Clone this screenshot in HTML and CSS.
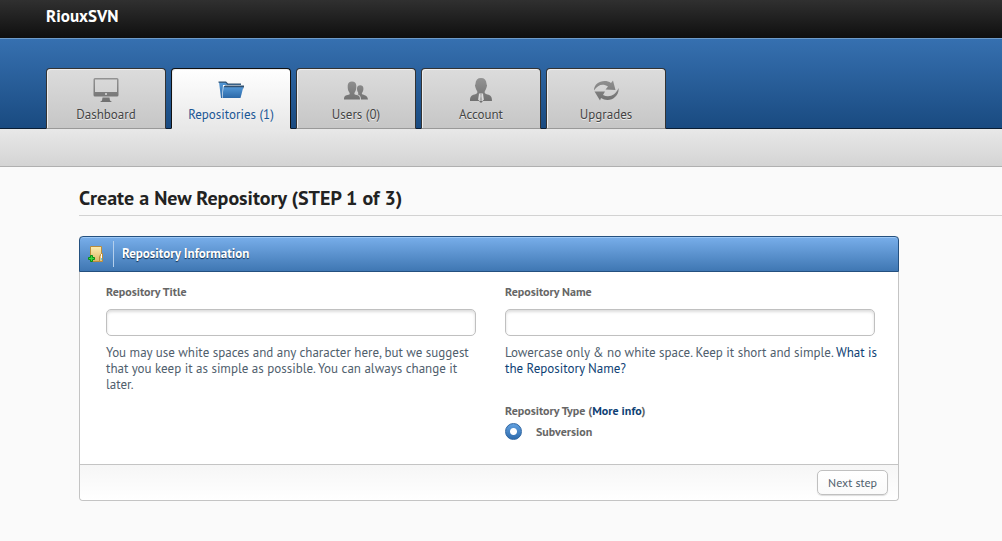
FILE: index.html
```html
<!DOCTYPE html>
<html lang="en">
<head>
    <meta charset="UTF-8">
    <meta name="viewport" content="width=device-width, initial-scale=1.0">
    <title>RiouxSVN</title>
    <link rel="stylesheet" href="styles.css">
</head>
<body>
    <!-- shared gradients for the icons -->
    <svg class="defs" width="0" height="0" aria-hidden="true">
        <defs>
            <linearGradient id="grey" x1="0" y1="0" x2="0" y2="26" gradientUnits="userSpaceOnUse">
                <stop offset="0" stop-color="#959595"/>
                <stop offset="1" stop-color="#6e6e6e"/>
            </linearGradient>
            <linearGradient id="blue" x1="0" y1="0" x2="0" y2="1">
                <stop offset="0" stop-color="#5499d8"/>
                <stop offset="1" stop-color="#2b68a8"/>
            </linearGradient>
            <linearGradient id="gold" x1="0" y1="0" x2="0" y2="1">
                <stop offset="0" stop-color="#fdeeb0"/>
                <stop offset="1" stop-color="#dfb566"/>
            </linearGradient>
        </defs>
    </svg>

    <div class="topbar">
        <a class="brand" href="#">RiouxSVN</a>
    </div>

    <header class="header">
        <nav class="tabs">
            <a class="tab" href="#">
                <svg class="icon" width="26" height="26" viewBox="0 0 26 26">
                    <path fill="url(#grey)" fill-rule="evenodd" d="M2 1h22q1.500 0 1.500 1.500V18q0 1.500-1.500 1.500H2Q.5 19.500.5 18V2.500Q.5 1 2 1zM2 2.500V15h22V2.500z"/>
                    <path fill="url(#grey)" d="M9.500 20.500h7l.5 3 2 1.500H7l2-1.500z"/>
                    <circle cx="13" cy="17" r="1" fill="#dcdcdc"/>
                </svg>
                <span>Dashboard</span>
            </a>
            <a class="tab active" href="#">
                <svg class="icon" width="26" height="26" viewBox="0 0 26 26">
                    <path fill="url(#blue)" d="M1 5h7l2 2h13v2H7L5 21H3z"/>
                    <path fill="#31506f" d="M.5 4.500H8L10 6.500h13v1.300H9.500l-2-2H.5z"/>
                    <path fill="#fff" d="M5 8h18v1.500H6.500L5 21H4z"/>
                    <path fill="url(#blue)" d="M5.500 9.500H25.500L22.500 21H4.500z"/>
                    <path fill="#31506f" d="M6 9.500 7 8.500h19v1.200L25 12l.2-1.800H6z"/>
                </svg>
                <span>Repositories (1)</span>
            </a>
            <a class="tab" href="#">
                <svg class="icon" width="26" height="26" viewBox="0 0 26 26">
                    <path fill="url(#grey)" d="M1 22.500c0-3.500 1.500-4 4.500-4.700 1.500-.4 1.500-1.300.7-2.600C5 13.500 4.600 12 4.700 8.500 4.900 5.700 6.500 4.500 9 4.500s4.200 1.200 4.300 4c.1 3.500-.3 5-1.500 6.700-.8 1.300-.6 2.200.9 2.600 3 .7 4.300 1.200 4.300 4.700z"/>
                    <path fill="url(#grey)" d="M18 22.500c0-3-1.200-4.200-3.400-5.200.8-.4.900-1 .4-2-.9-1.500-1-2.600-1-4 .1-2 1.300-3 3.200-3s3.200 1 3.200 3c0 1.700-.2 2.900-1.100 4.100-.7 1.100-.6 1.700.5 2.200 2.600.9 4.600 1.500 5.200 4.900z"/>
                </svg>
                <span>Users (0)</span>
            </a>
            <a class="tab" href="#">
                <svg class="icon" width="26" height="26" viewBox="0 0 26 26">
                    <path fill="url(#grey)" d="M2 24c0-4.500 1.200-5.600 4.500-6.500 2.400-.7 3.300-1.200 2.700-3.200C8 12.500 7.700 11 7.200 9.500 6.500 8 7.500 8 7.500 6.500 7.700 3 9.500 1 13 1s5.300 2 5.500 5.500c0 1.500 1 1.500.3 3-.5 1.500-.8 3-2 4.800-.6 2 .3 2.500 2.700 3.200 3.300.9 4.500 2 4.500 6.500h-9l-2 2-2-2z"/>
                    <path fill="#dcdcdc" d="M11 16.500h4l.8 6-1.300 1.500h-3L10.200 22.500z"/>
                    <path fill="url(#grey)" d="M12.200 17h1.600l-.3 2 .8 4-1.300 1.500-1.300-1.500.8-4z" opacity=".5"/>
                </svg>
                <span>Account</span>
            </a>
            <a class="tab" href="#">
                <svg class="icon" width="26" height="26" viewBox="0 0 26 26">
                    <path fill="url(#grey)" d="M1 13.500C1 7.500 6 4 11.500 4c2.500 0 4.500.6 6.500 2l2-2.500 2.500 9.500-10-.5 2.500-3c-5-3-10-2-14 4z"/>
                    <path fill="url(#grey)" d="M25.500 11c1 6-4.500 12-11 12-2.500 0-4.500-.7-6.500-2l-1 2.500L1.500 14.500l10.500 0-2 3.500c6 3 12.500.5 15.500-7z"/>
                </svg>
                <span>Upgrades</span>
            </a>
        </nav>
    </header>
    <div class="subbar"></div>

    <main class="content">
        <h1 class="title">Create a New Repository (STEP 1 of 3)</h1>

        <form class="panel">
            <div class="panel-header">
                <svg class="panel-icon" width="16" height="18" viewBox="0 0 16 18">
                    <path fill="url(#gold)" stroke="#b98c3c" d="M2.500 1.500h11v15h-11z"/>
                    <path fill="#e8c57b" stroke="#b98c3c" d="M13.500 8.500h1v8h-3v-5z"/>
                    <path fill="#fff" d="M13 9h1v4h-1z"/>
                    <path fill="#5bc8f5" d="M13 13h1v2h-1z"/>
                    <path fill="#3ddc3d" stroke="#0a8a16" d="M2.500 10.500h2v2h2v2h-2v2h-2v-2h-2v-2h2z"/>
                </svg>
                <h2>Repository Information</h2>
            </div>

            <div class="panel-body">
                <div class="column">
                    <label class="label" for="repo-title">Repository Title</label>
                    <input class="field" type="text" id="repo-title">
                    <p class="hint">You may use white spaces and any character here, but we suggest that you keep it as simple as possible. You can always change it later.</p>
                </div>
                <div class="column">
                    <label class="label" for="repo-name">Repository Name</label>
                    <input class="field" type="text" id="repo-name">
                    <p class="hint">Lowercase only &amp; no white space. Keep it short and simple. <a href="#">What is the Repository Name?</a></p>
                    <fieldset class="types">
                        <legend class="label">Repository Type (<a href="#">More info</a>)</legend>
                        <div class="option">
                            <input class="radio" type="radio" id="type-svn" name="type" checked>
                            <label class="label" for="type-svn">Subversion</label>
                        </div>
                    </fieldset>
                </div>
            </div>

            <div class="panel-footer">
                <button class="btn" type="submit">Next step</button>
            </div>
        </form>
    </main>
</body>
</html>
```
FILE: styles.css
```css
* {
    margin: 0;
    padding: 0;
    box-sizing: border-box;
}

body {
    font-family: 'PT Sans', 'Noto Sans', sans-serif;
    font-size: 13px;
    line-height: 16px;
    color: #50606d;
    background: #fafafa;
}

a {
    color: #0e3f74;
    text-decoration: none;
}

.defs {
    display: block;
}

.topbar {
    height: 38px;
    padding: 6px 46px;
    background: linear-gradient(#303030, #0f0f0f);
}

.brand {
    font-size: 17px;
    line-height: 20px;
    font-weight: bold;
    color: #fff;
}

.header {
    padding: 29px 46px 0;
    border-top: 1px solid #6e9bc9;
    background: linear-gradient(#3670b0, #194a80);
    box-shadow: inset 0 -1px #0a1d33;
}

.tabs {
    display: flex;
    gap: 5px;
}

.tab {
    display: flex;
    flex-direction: column;
    align-items: center;
    gap: 4px;
    width: 120px;
    height: 61px;
    padding-top: 8px;
    border: 1px solid #333;
    border-bottom-color: #999;
    border-radius: 4px 4px 0 0;
    background: linear-gradient(#dcdcdc, #c6c6c6);
    box-shadow: inset 1px 1px #eee;
    color: #444;
    text-shadow: 0 1px #eee;
}

.tab.active {
    border-color: #111;
    border-bottom-color: #e8e8e8;
    background: linear-gradient(#fff, #e8e8e8);
    color: #1b5795;
}

.subbar {
    height: 38px;
    border-bottom: 1px solid #b0b0b0;
    background: linear-gradient(#e8e8e8, #d4d4d4);
}

.content {
    padding: 19px 0 40px 79px;
}

.title {
    padding-bottom: 4px;
    margin-bottom: 20px;
    border-bottom: 1px solid #d2d2d2;
    font-size: 20px;
    line-height: 25px;
    font-weight: bold;
    color: #222;
}

.panel {
    max-width: 820px;
    border: 1px solid #c4c4c4;
    border-top: 0;
    border-radius: 4px;
    background: #fff;
}

.panel-header {
    display: flex;
    align-items: center;
    height: 36px;
    margin: 0 -1px;
    padding-left: 8px;
    border: 1px solid #24507f;
    border-radius: 4px 4px 0 0;
    background: linear-gradient(#78aeea, #3f77b3);
    box-shadow: inset 0 1px #9cc8f6;
}

.panel-header h2 {
    margin-left: 9px;
    padding-left: 8px;
    border-left: 1px solid #b4cfec;
    font-size: 13px;
    line-height: 26px;
    font-weight: bold;
    color: #fff;
    text-shadow: 0 1px 1px #14304f;
}

.panel-body {
    display: grid;
    grid-template-columns: 1fr 1fr;
    gap: 29px;
    padding: 12px 23px 24px 26px;
}

.label {
    display: block;
    font-size: 12px;
    font-weight: bold;
    color: #666;
}

.field {
    display: block;
    width: 100%;
    height: 27px;
    margin: 9px 0;
    padding: 0 8px;
    border: 1px solid #c0c0c0;
    border-radius: 5px;
    background: #fff;
    box-shadow: inset 0 2px 3px #ddd;
    font: inherit;
}

/* the hint may run slightly past the field */
.hint {
    margin-right: -4px;
}

.types {
    margin-top: 26px;
    border: 0;
}

.option {
    display: flex;
    align-items: center;
    gap: 14px;
    margin-top: 4px;
}

.radio {
    appearance: none;
    width: 17px;
    height: 17px;
    border: 1px solid #2f66a2;
    border-radius: 50%;
    background: radial-gradient(circle, #fff 3px, transparent 4px), linear-gradient(#62a0df, #2f6cad);
}

.panel-footer {
    display: flex;
    justify-content: flex-end;
    padding: 5px 10px;
    border-top: 1px solid #c4c4c4;
    border-radius: 0 0 4px 4px;
    background: linear-gradient(#f6f6f6, #fff);
}

.btn {
    height: 25px;
    padding: 0 10px;
    border: 1px solid #c0c0c0;
    border-radius: 5px;
    background: linear-gradient(#fff, #fafafa);
    box-shadow: 0 1px 1px #ddd;
    font: inherit;
    font-size: 12px;
    color: #50606d;
    cursor: pointer;
}
```
